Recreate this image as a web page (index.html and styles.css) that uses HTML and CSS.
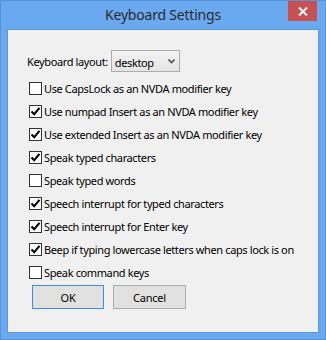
FILE: index.html
```html
<!DOCTYPE html>
<html>
<head>
<meta charset="utf-8">
<link rel="stylesheet" href="styles.css">
</head>
<body>
<div class="window">
  <div class="titlebar">
    <span class="title">Keyboard Settings</span>
    <div class="close"><svg width="10" height="9" viewBox="0 0 10 9"><path d="M1 0.5 L9 8.5 M9 0.5 L1 8.5" stroke="#fff" stroke-width="2"/></svg></div>
  </div>
  <div class="client">
    <div class="layout-row">
      <span class="label">Keyboard layout:</span>
      <div class="combo"><span>desktop</span><svg class="arrow" width="7" height="5" viewBox="0 0 7 5"><path d="M0.5 0.5 L3.5 3.5 L6.5 0.5" stroke="#555" stroke-width="1.6" fill="none"/></svg></div>
    </div>
    <div class="rows">
      <div class="row"><span class="cb"></span><span>Use CapsLock as an NVDA modifier key</span></div>
      <div class="row"><span class="cb checked"><svg width="11" height="11" viewBox="0 0 11 11"><path d="M1.5 5.5 L4.2 8.2 L9.5 1.8" stroke="#000" stroke-width="2.1" fill="none"/></svg></span><span>Use numpad Insert as an NVDA modifier key</span></div>
      <div class="row"><span class="cb checked"><svg width="11" height="11" viewBox="0 0 11 11"><path d="M1.5 5.5 L4.2 8.2 L9.5 1.8" stroke="#000" stroke-width="2.1" fill="none"/></svg></span><span>Use extended Insert as an NVDA modifier key</span></div>
      <div class="row"><span class="cb checked"><svg width="11" height="11" viewBox="0 0 11 11"><path d="M1.5 5.5 L4.2 8.2 L9.5 1.8" stroke="#000" stroke-width="2.1" fill="none"/></svg></span><span>Speak typed characters</span></div>
      <div class="row"><span class="cb"></span><span>Speak typed words</span></div>
      <div class="row"><span class="cb checked"><svg width="11" height="11" viewBox="0 0 11 11"><path d="M1.5 5.5 L4.2 8.2 L9.5 1.8" stroke="#000" stroke-width="2.1" fill="none"/></svg></span><span>Speech interrupt for typed characters</span></div>
      <div class="row"><span class="cb checked"><svg width="11" height="11" viewBox="0 0 11 11"><path d="M1.5 5.5 L4.2 8.2 L9.5 1.8" stroke="#000" stroke-width="2.1" fill="none"/></svg></span><span>Speech interrupt for Enter key</span></div>
      <div class="row"><span class="cb checked"><svg width="11" height="11" viewBox="0 0 11 11"><path d="M1.5 5.5 L4.2 8.2 L9.5 1.8" stroke="#000" stroke-width="2.1" fill="none"/></svg></span><span>Beep if typing lowercase letters when caps lock is on</span></div>
      <div class="row"><span class="cb"></span><span>Speak command keys</span></div>
    </div>
    <div class="buttons">
      <button class="btn default">OK</button>
      <button class="btn">Cancel</button>
    </div>
  </div>
</div>
</body>
</html>
```
FILE: styles.css
```css
html, body { margin: 0; padding: 0; }
body {
  width: 326px;
  height: 340px;
  font-family: "Noto Sans", "Open Sans", sans-serif;
  font-size: 11px;
  letter-spacing: -0.38px;
  color: #000;
}
.window {
  box-sizing: border-box;
  width: 326px;
  height: 340px;
  background: #6aa9f0;
  border: 1px solid #5893d8;
  display: flex;
  flex-direction: column;
  position: relative;
}
.titlebar {
  height: 28px;
  display: flex;
  align-items: center;
  justify-content: center;
  flex: none;
}
.title {
  font-size: 14px;
  letter-spacing: -0.2px;
  color: #2b2b2b;
  margin-top: -2px;
}
.close {
  position: absolute;
  top: 0;
  left: 287px;
  width: 29px;
  height: 20px;
  background: #c75050;
  display: flex;
  align-items: center;
  justify-content: center;
}
.client {
  flex: 1;
  margin: 0 6px 6px 6px;
  background: #f0f0f0;
  border: 1px solid #5b98dc;
  padding: 20px 0 0 20px;
  display: flex;
  flex-direction: column;
}
.layout-row {
  display: flex;
  align-items: center;
  height: 22px;
}
.label { margin-right: 3px; margin-left: -1px; white-space: nowrap; }
.combo {
  box-sizing: border-box;
  width: 69px;
  height: 22px;
  border: 1px solid #acacac;
  background: linear-gradient(#f2f2f2, #e5e5e5);
  display: flex;
  align-items: center;
  justify-content: space-between;
  padding: 0 4px 0 3px;
}
.combo span { margin-top: 2px; }
.arrow { margin-top: 1px; }
.rows {
  margin-top: 5px;
  display: flex;
  flex-direction: column;
}
.row {
  height: 23px;
  display: flex;
  align-items: center;
  white-space: nowrap;
}
.cb {
  box-sizing: border-box;
  flex: none;
  width: 13px;
  height: 13px;
  border: 1px solid #333;
  background: #fff;
  margin-right: 2px;
  margin-left: 1px;
  display: flex;
  align-items: center;
  justify-content: center;
}
.buttons {
  display: flex;
  gap: 9px;
  margin-top: 1px;
  margin-left: 4px;
}
.btn {
  box-sizing: border-box;
  width: 73px;
  height: 24px;
  border: 1px solid #adadad;
  background: #e1e1e1;
  font-family: inherit;
  font-size: 11px;
  letter-spacing: -0.2px;
  color: #000;
  padding: 0;
  margin: 0;
}
.btn.default { border-color: #3c8ee8; width: 72px; }
```
